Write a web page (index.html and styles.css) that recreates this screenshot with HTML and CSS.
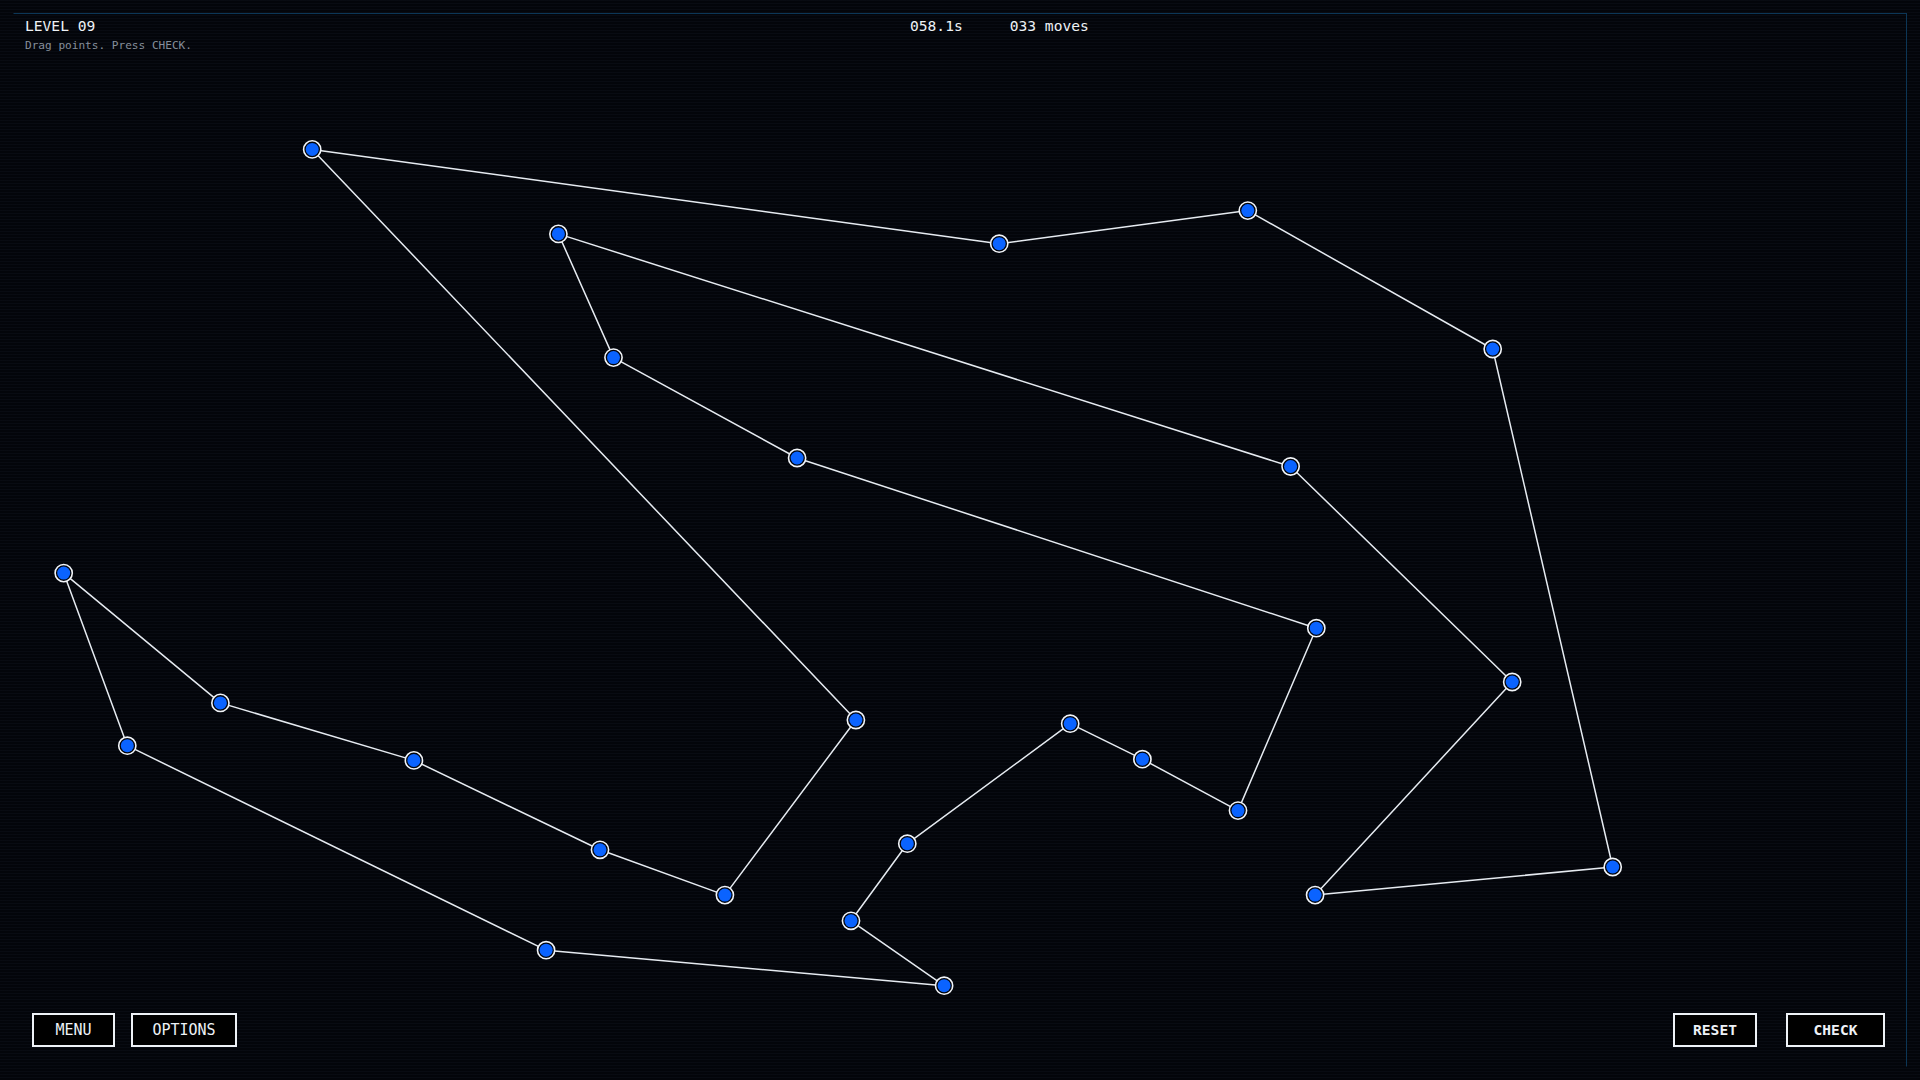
FILE: index.html
```html
<!DOCTYPE html>
<html lang="en">
<head>
<meta charset="utf-8">
<title>Level 09</title>
<link rel="stylesheet" href="styles.css">
</head>
<body>
<div class="screen">
  <svg class="board" viewBox="0 0 1920 1080" xmlns="http://www.w3.org/2000/svg">
    <polygon class="edges" points="312.2,149.4 999.2,243.7 1247.8,210.6 1492.7,349 1612.7,867 1315.1,895.1 1512.2,682 1290.6,466.5 558.4,233.9 613.5,357.6 797.1,458 1316.3,628.2 1238,810.6 1142.4,759.2 1070.2,723.7 907.3,843.7 851,920.8 944.1,985.7 546.1,950.2 127.3,745.7 63.7,573.1 220.4,702.9 413.9,760.4 600,849.8 724.9,895.1 855.9,720"/>
    <g class="nodes">
      <g transform="translate(312.2 149.4)"><circle class="ring" r="8.6"/><circle class="dot" r="6.5"/></g>
      <g transform="translate(999.2 243.7)"><circle class="ring" r="8.6"/><circle class="dot" r="6.5"/></g>
      <g transform="translate(1247.8 210.6)"><circle class="ring" r="8.6"/><circle class="dot" r="6.5"/></g>
      <g transform="translate(1492.7 349)"><circle class="ring" r="8.6"/><circle class="dot" r="6.5"/></g>
      <g transform="translate(1612.7 867)"><circle class="ring" r="8.6"/><circle class="dot" r="6.5"/></g>
      <g transform="translate(1315.1 895.1)"><circle class="ring" r="8.6"/><circle class="dot" r="6.5"/></g>
      <g transform="translate(1512.2 682)"><circle class="ring" r="8.6"/><circle class="dot" r="6.5"/></g>
      <g transform="translate(1290.6 466.5)"><circle class="ring" r="8.6"/><circle class="dot" r="6.5"/></g>
      <g transform="translate(558.4 233.9)"><circle class="ring" r="8.6"/><circle class="dot" r="6.5"/></g>
      <g transform="translate(613.5 357.6)"><circle class="ring" r="8.6"/><circle class="dot" r="6.5"/></g>
      <g transform="translate(797.1 458)"><circle class="ring" r="8.6"/><circle class="dot" r="6.5"/></g>
      <g transform="translate(1316.3 628.2)"><circle class="ring" r="8.6"/><circle class="dot" r="6.5"/></g>
      <g transform="translate(1238 810.6)"><circle class="ring" r="8.6"/><circle class="dot" r="6.5"/></g>
      <g transform="translate(1142.4 759.2)"><circle class="ring" r="8.6"/><circle class="dot" r="6.5"/></g>
      <g transform="translate(1070.2 723.7)"><circle class="ring" r="8.6"/><circle class="dot" r="6.5"/></g>
      <g transform="translate(907.3 843.7)"><circle class="ring" r="8.6"/><circle class="dot" r="6.5"/></g>
      <g transform="translate(851 920.8)"><circle class="ring" r="8.6"/><circle class="dot" r="6.5"/></g>
      <g transform="translate(944.1 985.7)"><circle class="ring" r="8.6"/><circle class="dot" r="6.5"/></g>
      <g transform="translate(546.1 950.2)"><circle class="ring" r="8.6"/><circle class="dot" r="6.5"/></g>
      <g transform="translate(127.3 745.7)"><circle class="ring" r="8.6"/><circle class="dot" r="6.5"/></g>
      <g transform="translate(63.7 573.1)"><circle class="ring" r="8.6"/><circle class="dot" r="6.5"/></g>
      <g transform="translate(220.4 702.9)"><circle class="ring" r="8.6"/><circle class="dot" r="6.5"/></g>
      <g transform="translate(413.9 760.4)"><circle class="ring" r="8.6"/><circle class="dot" r="6.5"/></g>
      <g transform="translate(600 849.8)"><circle class="ring" r="8.6"/><circle class="dot" r="6.5"/></g>
      <g transform="translate(724.9 895.1)"><circle class="ring" r="8.6"/><circle class="dot" r="6.5"/></g>
      <g transform="translate(855.9 720)"><circle class="ring" r="8.6"/><circle class="dot" r="6.5"/></g>
    </g>
  </svg>
  <div class="frame">
    <header class="hud">
      <div class="title-block">
        <div class="level">LEVEL 09</div>
        <div class="hint">Drag points. Press CHECK.</div>
      </div>
      <div class="stats">
        <span class="stat">058.1s</span>
        <span class="stat">033 moves</span>
      </div>
    </header>
    <footer class="controls">
      <div class="group">
        <button class="btn btn-menu">MENU</button>
        <button class="btn btn-options">OPTIONS</button>
      </div>
      <div class="group group-right">
        <button class="btn btn-strong btn-reset">RESET</button>
        <button class="btn btn-strong btn-check">CHECK</button>
      </div>
    </footer>
  </div>
</div>
</body>
</html>
```
FILE: styles.css
```css
html, body {
  margin: 0;
  padding: 0;
  width: 1920px;
  height: 1080px;
  overflow: hidden;
}

body {
  background-color: #03050a;
  background-image: repeating-linear-gradient(to bottom, rgba(120, 140, 190, 0.045) 0, rgba(120, 140, 190, 0.045) 1px, transparent 1px, transparent 3px);
  font-family: "DejaVu Sans Mono", "Liberation Mono", monospace;
  color: #eef2f7;
}

.screen {
  position: relative;
  width: 1920px;
  height: 1080px;
  padding: 13px;
  box-sizing: border-box;
}

.board {
  position: absolute;
  left: 0;
  top: 0;
  width: 1920px;
  height: 1080px;
}

.edges {
  fill: none;
  stroke: #e6ebf1;
  stroke-width: 1.5;
  stroke-linejoin: round;
}

.ring {
  fill: #02040a;
  stroke: #f2f5f9;
  stroke-width: 1.6;
}

.dot {
  fill: #0a63ff;
}

.frame {
  position: relative;
  height: 100%;
  box-sizing: border-box;
  border: 1px solid transparent;
  border-top-color: #0c3656;
  border-right-color: #0c3656;
  display: flex;
  flex-direction: column;
  justify-content: space-between;
  pointer-events: none;
}

.hud {
  display: flex;
  align-items: flex-start;
  padding: 3px 11px 0;
}

.title-block {
  width: 885px;
}

.level {
  font-size: 14.6px;
  line-height: 17px;
  color: #eef2f6;
}

.hint {
  margin-top: 5px;
  font-size: 11.1px;
  line-height: 13px;
  color: #868f9b;
}

.stats {
  display: flex;
  gap: 47px;
  font-size: 14.6px;
  line-height: 17px;
  color: #eef2f6;
}

.controls {
  display: flex;
  justify-content: space-between;
  align-items: flex-end;
  padding: 0 21px 19px 18px;
}

.group {
  display: flex;
  gap: 16px;
}

.group-right {
  gap: 29px;
}

.btn {
  box-sizing: border-box;
  height: 34px;
  padding: 0;
  background: #000;
  border: 2px solid #eef2f7;
  color: #eef2f7;
  font-family: "DejaVu Sans Mono", "Liberation Mono", monospace;
  font-size: 15px;
  line-height: 30px;
  text-align: center;
  pointer-events: auto;
}

.btn-strong {
  font-weight: bold;
  font-size: 14.6px;
}

.btn-menu { width: 83px; }
.btn-options { width: 106px; }
.btn-reset { width: 84px; }
.btn-check { width: 99px; }
```
